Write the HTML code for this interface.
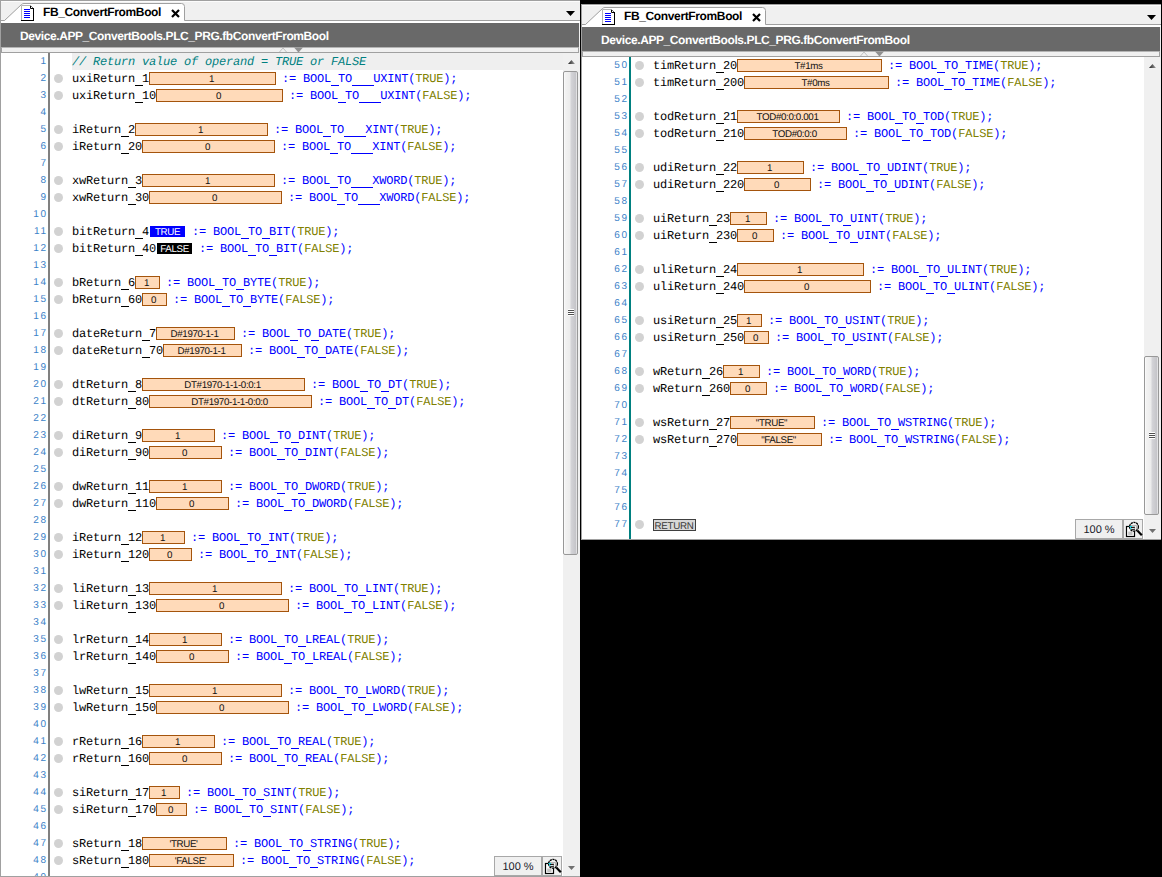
<!DOCTYPE html>
<html>
<head>
<meta charset="utf-8">
<title>FB_ConvertFromBool</title>
<style>
html,body{margin:0;padding:0;}
body{width:1162px;height:877px;background:#000;position:relative;overflow:hidden;font-family:"Liberation Sans",sans-serif;text-rendering:geometricPrecision;}
.panel{position:absolute;width:580px;background:#fff;overflow:hidden;}
.pl{left:0;top:0;height:877px;}
.pr{left:581px;top:4px;height:536px;}
.blk1{position:absolute;left:580px;top:0;width:1px;height:877px;background:#000;}
.panel:before{content:"";position:absolute;left:0;top:0;width:1px;height:100%;background:#a0a0a0;z-index:5;}
.hdrbg{position:absolute;left:0;top:0;width:580px;height:53px;background:#f0f0f0;}
.tabbar{position:absolute;left:0;top:0;width:580px;height:23px;background:#f0f0f0;box-sizing:border-box;border-top:1px solid #a0a0a0;}
.tabbar:before{content:"";position:absolute;left:0;top:0;width:580px;height:1px;background:#fcfcfc;}
.tabbar:after{content:"";position:absolute;left:0;top:19px;width:580px;height:3px;background:#fff;border-top:1px solid #a0a0a0;box-sizing:border-box;}
.tabshape{position:absolute;left:0;top:0;}
.docicon{position:absolute;left:21px;top:5px;}
.tabtxt{position:absolute;left:43px;top:5px;font-size:12px;line-height:15px;font-weight:bold;color:#000;white-space:nowrap;letter-spacing:-0.37px;}
.tabx{position:absolute;left:170.5px;top:8.5px;}
.tabdd{position:absolute;left:566px;top:11px;}
.crumb{position:absolute;left:1px;top:23px;width:578px;height:24px;background:#696969;color:#fff;font-weight:bold;font-size:12px;line-height:24px;white-space:nowrap;letter-spacing:-0.41px;}
.crumb span{position:absolute;left:19px;top:1px;}
.split{position:absolute;left:1px;top:47px;width:578px;height:6px;background:#f0f0f0;box-sizing:border-box;border-top:1px solid #b4b4b4;border-bottom:1px solid #a0a0a0;border-left:1px solid #a0a0a0;border-right:1px solid #a0a0a0;}
.splitmk{position:absolute;left:279px;top:47px;}
.code{position:absolute;left:0;top:0;width:563px;height:100%;}
.gut{position:absolute;left:48px;top:53px;width:2px;bottom:0;background:#808080;}
.pr .gut{background:#008080;}
.ln{position:absolute;left:0;width:47.6px;height:17px;line-height:17px;text-align:right;font-size:10px;letter-spacing:1.64px;color:#3c82c8;}
.dot{position:absolute;left:54px;width:9px;height:9px;border-radius:50%;background:#d2d2d2;}
.hl{position:absolute;left:72px;width:491px;height:17px;background:#efefef;}
.row{position:absolute;left:72px;height:17px;line-height:17px;margin-top:1px;font-family:"Liberation Mono",monospace;font-size:12px;letter-spacing:-0.2px;white-space:pre;color:#000;}
.row u{text-decoration:none;-webkit-text-fill-color:transparent;position:relative;}
.row u:after{content:"";position:absolute;left:-0.5px;top:13px;width:8px;height:1px;background:currentColor;}
.cm{color:#008080;font-style:italic;}
.k{color:#0000ff;}
.o{color:#808000;}
.b{display:inline-block;vertical-align:top;margin-top:1px;margin-right:-1px;height:13px;box-sizing:border-box;padding-right:2px;border:1px solid #a4540c;background:#ffdab9;font-family:"Liberation Sans",sans-serif;font-size:9.75px;line-height:13px;letter-spacing:-0.35px;text-align:center;color:#101010;overflow:hidden;}
.bb{display:inline-block;vertical-align:top;margin-top:2px;margin-left:1px;width:35px;height:11px;font-family:"Liberation Sans",sans-serif;font-size:9.75px;line-height:13px;letter-spacing:-0.35px;text-align:center;color:#fff;overflow:hidden;}
.bt{background:#0000ff;}
.bf{background:#000;}
.ret{position:absolute;left:72px;width:43px;height:12px;box-sizing:border-box;border:1px solid #404040;background:#d8d8d8;font-size:9.75px;line-height:14px;letter-spacing:-0.25px;text-align:center;text-indent:-1px;color:#383838;overflow:hidden;}
.sb{position:absolute;left:563px;top:53px;width:17px;bottom:1px;background:#f0f0f0;}
.sbup{position:absolute;left:5px;top:7px;}
.sbdn{position:absolute;left:5px;bottom:6px;}
.thumb{position:absolute;left:0;width:15px;box-sizing:border-box;border:1px solid #989898;border-radius:2px;background:linear-gradient(to right,#ffffff 0,#f3f3f3 1px,#ececec 6px,#d4d4d8 7px,#c4c4c8 12px,#ffffff 13px);}
.grip{position:absolute;left:4px;top:50%;margin-top:-4px;width:6px;height:7px;background:linear-gradient(to bottom,#fff 0,#fff 1px,#505050 1px,#505050 2px,#fff 2px,#fff 3px,#505050 3px,#505050 4px,#fff 4px,#fff 5px,#505050 5px,#505050 6px,#fff 6px);}
.zoom{position:absolute;left:494px;bottom:1px;width:48px;height:20px;box-sizing:border-box;border:1px solid #a8a8a8;background:#f0f0f0;font-size:11px;line-height:20px;text-align:center;color:#1a1a2a;}
.zoomic{position:absolute;left:542px;bottom:1px;width:20px;height:20px;box-sizing:border-box;border:1px solid #a8a8a8;background:#f0f0f0;}
.zoomic svg{position:absolute;left:1px;top:1px;}
.botline{position:absolute;left:0;bottom:0;width:580px;height:1px;background:#a0a0a0;}

</style>
</head>
<body>
<div class="panel pl">
<div class="hdrbg"></div>
<div class="tabbar"></div>
<svg class="tabshape" width="200" height="24" viewBox="0 0 200 24">
<path d="M1 20.5 L4.5 20.5 L21.5 4.5 Q22.5 3.5 24 3.5 L181.5 3.5 Q184.5 3.5 184.5 6.5 L184.5 23 L1 23 Z" fill="#ffffff" stroke="none"/>
<path d="M1 20.5 L4.5 20.5 L21.5 4.5 Q22.5 3.5 24 3.5 L181.5 3.5 Q184.5 3.5 184.5 6.5 L184.5 20.5" fill="none" stroke="#a0a0a0" stroke-width="1"/>
</svg>
<svg class="docicon" width="14" height="16" viewBox="0 0 14 16">
<path d="M0 0 L9 0 L13 4 L13 16 L0 16 Z" fill="#ffffff" stroke="none"/>
<path d="M0.5 15 L0.5 0.5 L9.5 0.5" fill="none" stroke="#b4b4b4" stroke-width="1"/>
<path d="M9.5 0.5 L12.5 3.5" fill="none" stroke="#707070" stroke-width="1"/>
<path d="M9.5 1 L9.5 3.5 L12.5 3.5" fill="none" stroke="#000" stroke-width="1"/>
<path d="M12.5 3 L12.5 15.5" fill="none" stroke="#000" stroke-width="1"/>
<path d="M0 15.5 L13 15.5" fill="none" stroke="#000" stroke-width="1"/>
<path d="M3 4.5 H9 M3 6.5 H9 M3 8.5 H9 M3 10.5 H9 M3 12.5 H9" stroke="#0000ff" stroke-width="1" fill="none"/>
</svg>
<div class="tabtxt">FB_ConvertFromBool</div>
<svg class="tabx" width="9" height="9" viewBox="0 0 9 9"><path d="M1 1 L8 8 M8 1 L1 8" stroke="#000" stroke-width="2.2" fill="none"/></svg>
<svg class="tabdd" width="9" height="5" viewBox="0 0 9 5"><path d="M0 0 H9 L4.5 5 Z" fill="#000"/></svg>
<div class="crumb"><span>Device.APP_ConvertBools.PLC_PRG.fbConvertFromBool</span></div>
<div class="split"></div>
<svg class="splitmk" width="30" height="6" viewBox="0 0 30 6">
<path d="M0.5 5 L4 1 L7.5 5" fill="none" stroke="#c0c0c0" stroke-width="1"/>
<path d="M15 0.5 H24 L19.5 5.5 Z" fill="#909090"/>
</svg>
<div class="code">
<div class="gut"></div>
<div class="ln" style="top:53px">1</div>
<div class="hl" style="top:53px"></div>
<div class="row cm" style="top:53px">// Return value of operand = TRUE or FALSE</div>
<div class="ln" style="top:70px">2</div>
<div class="dot" style="top:74px"></div>
<div class="row" style="top:70px">uxiReturn<u>_</u>1<span class="b" style="width:127px">1</span><span class="k"> := BOOL<u>_</u>TO<u>_</u><u>_</u><u>_</u>UXINT(</span><span class="o">TRUE</span><span class="k">);</span></div>
<div class="ln" style="top:87px">3</div>
<div class="dot" style="top:91px"></div>
<div class="row" style="top:87px">uxiReturn<u>_</u>10<span class="b" style="width:127px">0</span><span class="k"> := BOOL<u>_</u>TO<u>_</u><u>_</u><u>_</u>UXINT(</span><span class="o">FALSE</span><span class="k">);</span></div>
<div class="ln" style="top:104px">4</div>
<div class="ln" style="top:121px">5</div>
<div class="dot" style="top:125px"></div>
<div class="row" style="top:121px">iReturn<u>_</u>2<span class="b" style="width:133px">1</span><span class="k"> := BOOL<u>_</u>TO<u>_</u><u>_</u><u>_</u>XINT(</span><span class="o">TRUE</span><span class="k">);</span></div>
<div class="ln" style="top:138px">6</div>
<div class="dot" style="top:142px"></div>
<div class="row" style="top:138px">iReturn<u>_</u>20<span class="b" style="width:133px">0</span><span class="k"> := BOOL<u>_</u>TO<u>_</u><u>_</u><u>_</u>XINT(</span><span class="o">FALSE</span><span class="k">);</span></div>
<div class="ln" style="top:155px">7</div>
<div class="ln" style="top:172px">8</div>
<div class="dot" style="top:176px"></div>
<div class="row" style="top:172px">xwReturn<u>_</u>3<span class="b" style="width:133px">1</span><span class="k"> := BOOL<u>_</u>TO<u>_</u><u>_</u><u>_</u>XWORD(</span><span class="o">TRUE</span><span class="k">);</span></div>
<div class="ln" style="top:189px">9</div>
<div class="dot" style="top:193px"></div>
<div class="row" style="top:189px">xwReturn<u>_</u>30<span class="b" style="width:133px">0</span><span class="k"> := BOOL<u>_</u>TO<u>_</u><u>_</u><u>_</u>XWORD(</span><span class="o">FALSE</span><span class="k">);</span></div>
<div class="ln" style="top:206px">10</div>
<div class="ln" style="top:223px">11</div>
<div class="dot" style="top:227px"></div>
<div class="row" style="top:223px">bitReturn<u>_</u>4<span class="bb bt">TRUE</span><span class="k"> := BOOL<u>_</u>TO<u>_</u>BIT(</span><span class="o">TRUE</span><span class="k">);</span></div>
<div class="ln" style="top:240px">12</div>
<div class="dot" style="top:244px"></div>
<div class="row" style="top:240px">bitReturn<u>_</u>40<span class="bb bf">FALSE</span><span class="k"> := BOOL<u>_</u>TO<u>_</u>BIT(</span><span class="o">FALSE</span><span class="k">);</span></div>
<div class="ln" style="top:257px">13</div>
<div class="ln" style="top:274px">14</div>
<div class="dot" style="top:278px"></div>
<div class="row" style="top:274px">bReturn<u>_</u>6<span class="b" style="width:25px">1</span><span class="k"> := BOOL<u>_</u>TO<u>_</u>BYTE(</span><span class="o">TRUE</span><span class="k">);</span></div>
<div class="ln" style="top:291px">15</div>
<div class="dot" style="top:295px"></div>
<div class="row" style="top:291px">bReturn<u>_</u>60<span class="b" style="width:25px">0</span><span class="k"> := BOOL<u>_</u>TO<u>_</u>BYTE(</span><span class="o">FALSE</span><span class="k">);</span></div>
<div class="ln" style="top:308px">16</div>
<div class="ln" style="top:325px">17</div>
<div class="dot" style="top:329px"></div>
<div class="row" style="top:325px">dateReturn<u>_</u>7<span class="b" style="width:79px">D#1970-1-1</span><span class="k"> := BOOL<u>_</u>TO<u>_</u>DATE(</span><span class="o">TRUE</span><span class="k">);</span></div>
<div class="ln" style="top:342px">18</div>
<div class="dot" style="top:346px"></div>
<div class="row" style="top:342px">dateReturn<u>_</u>70<span class="b" style="width:79px">D#1970-1-1</span><span class="k"> := BOOL<u>_</u>TO<u>_</u>DATE(</span><span class="o">FALSE</span><span class="k">);</span></div>
<div class="ln" style="top:359px">19</div>
<div class="ln" style="top:376px">20</div>
<div class="dot" style="top:380px"></div>
<div class="row" style="top:376px">dtReturn<u>_</u>8<span class="b" style="width:163px">DT#1970-1-1-0:0:1</span><span class="k"> := BOOL<u>_</u>TO<u>_</u>DT(</span><span class="o">TRUE</span><span class="k">);</span></div>
<div class="ln" style="top:393px">21</div>
<div class="dot" style="top:397px"></div>
<div class="row" style="top:393px">dtReturn<u>_</u>80<span class="b" style="width:163px">DT#1970-1-1-0:0:0</span><span class="k"> := BOOL<u>_</u>TO<u>_</u>DT(</span><span class="o">FALSE</span><span class="k">);</span></div>
<div class="ln" style="top:410px">22</div>
<div class="ln" style="top:427px">23</div>
<div class="dot" style="top:431px"></div>
<div class="row" style="top:427px">diReturn<u>_</u>9<span class="b" style="width:73px">1</span><span class="k"> := BOOL<u>_</u>TO<u>_</u>DINT(</span><span class="o">TRUE</span><span class="k">);</span></div>
<div class="ln" style="top:444px">24</div>
<div class="dot" style="top:448px"></div>
<div class="row" style="top:444px">diReturn<u>_</u>90<span class="b" style="width:73px">0</span><span class="k"> := BOOL<u>_</u>TO<u>_</u>DINT(</span><span class="o">FALSE</span><span class="k">);</span></div>
<div class="ln" style="top:461px">25</div>
<div class="ln" style="top:478px">26</div>
<div class="dot" style="top:482px"></div>
<div class="row" style="top:478px">dwReturn<u>_</u>11<span class="b" style="width:73px">1</span><span class="k"> := BOOL<u>_</u>TO<u>_</u>DWORD(</span><span class="o">TRUE</span><span class="k">);</span></div>
<div class="ln" style="top:495px">27</div>
<div class="dot" style="top:499px"></div>
<div class="row" style="top:495px">dwReturn<u>_</u>110<span class="b" style="width:73px">0</span><span class="k"> := BOOL<u>_</u>TO<u>_</u>DWORD(</span><span class="o">FALSE</span><span class="k">);</span></div>
<div class="ln" style="top:512px">28</div>
<div class="ln" style="top:529px">29</div>
<div class="dot" style="top:533px"></div>
<div class="row" style="top:529px">iReturn<u>_</u>12<span class="b" style="width:43px">1</span><span class="k"> := BOOL<u>_</u>TO<u>_</u>INT(</span><span class="o">TRUE</span><span class="k">);</span></div>
<div class="ln" style="top:546px">30</div>
<div class="dot" style="top:550px"></div>
<div class="row" style="top:546px">iReturn<u>_</u>120<span class="b" style="width:43px">0</span><span class="k"> := BOOL<u>_</u>TO<u>_</u>INT(</span><span class="o">FALSE</span><span class="k">);</span></div>
<div class="ln" style="top:563px">31</div>
<div class="ln" style="top:580px">32</div>
<div class="dot" style="top:584px"></div>
<div class="row" style="top:580px">liReturn<u>_</u>13<span class="b" style="width:133px">1</span><span class="k"> := BOOL<u>_</u>TO<u>_</u>LINT(</span><span class="o">TRUE</span><span class="k">);</span></div>
<div class="ln" style="top:597px">33</div>
<div class="dot" style="top:601px"></div>
<div class="row" style="top:597px">liReturn<u>_</u>130<span class="b" style="width:133px">0</span><span class="k"> := BOOL<u>_</u>TO<u>_</u>LINT(</span><span class="o">FALSE</span><span class="k">);</span></div>
<div class="ln" style="top:614px">34</div>
<div class="ln" style="top:631px">35</div>
<div class="dot" style="top:635px"></div>
<div class="row" style="top:631px">lrReturn<u>_</u>14<span class="b" style="width:73px">1</span><span class="k"> := BOOL<u>_</u>TO<u>_</u>LREAL(</span><span class="o">TRUE</span><span class="k">);</span></div>
<div class="ln" style="top:648px">36</div>
<div class="dot" style="top:652px"></div>
<div class="row" style="top:648px">lrReturn<u>_</u>140<span class="b" style="width:73px">0</span><span class="k"> := BOOL<u>_</u>TO<u>_</u>LREAL(</span><span class="o">FALSE</span><span class="k">);</span></div>
<div class="ln" style="top:665px">37</div>
<div class="ln" style="top:682px">38</div>
<div class="dot" style="top:686px"></div>
<div class="row" style="top:682px">lwReturn<u>_</u>15<span class="b" style="width:133px">1</span><span class="k"> := BOOL<u>_</u>TO<u>_</u>LWORD(</span><span class="o">TRUE</span><span class="k">);</span></div>
<div class="ln" style="top:699px">39</div>
<div class="dot" style="top:703px"></div>
<div class="row" style="top:699px">lwReturn<u>_</u>150<span class="b" style="width:133px">0</span><span class="k"> := BOOL<u>_</u>TO<u>_</u>LWORD(</span><span class="o">FALSE</span><span class="k">);</span></div>
<div class="ln" style="top:716px">40</div>
<div class="ln" style="top:733px">41</div>
<div class="dot" style="top:737px"></div>
<div class="row" style="top:733px">rReturn<u>_</u>16<span class="b" style="width:73px">1</span><span class="k"> := BOOL<u>_</u>TO<u>_</u>REAL(</span><span class="o">TRUE</span><span class="k">);</span></div>
<div class="ln" style="top:750px">42</div>
<div class="dot" style="top:754px"></div>
<div class="row" style="top:750px">rReturn<u>_</u>160<span class="b" style="width:73px">0</span><span class="k"> := BOOL<u>_</u>TO<u>_</u>REAL(</span><span class="o">FALSE</span><span class="k">);</span></div>
<div class="ln" style="top:767px">43</div>
<div class="ln" style="top:784px">44</div>
<div class="dot" style="top:788px"></div>
<div class="row" style="top:784px">siReturn<u>_</u>17<span class="b" style="width:31px">1</span><span class="k"> := BOOL<u>_</u>TO<u>_</u>SINT(</span><span class="o">TRUE</span><span class="k">);</span></div>
<div class="ln" style="top:801px">45</div>
<div class="dot" style="top:805px"></div>
<div class="row" style="top:801px">siReturn<u>_</u>170<span class="b" style="width:31px">0</span><span class="k"> := BOOL<u>_</u>TO<u>_</u>SINT(</span><span class="o">FALSE</span><span class="k">);</span></div>
<div class="ln" style="top:818px">46</div>
<div class="ln" style="top:835px">47</div>
<div class="dot" style="top:839px"></div>
<div class="row" style="top:835px">sReturn<u>_</u>18<span class="b" style="width:85px">'TRUE'</span><span class="k"> := BOOL<u>_</u>TO<u>_</u>STRING(</span><span class="o">TRUE</span><span class="k">);</span></div>
<div class="ln" style="top:852px">48</div>
<div class="dot" style="top:856px"></div>
<div class="row" style="top:852px">sReturn<u>_</u>180<span class="b" style="width:85px">'FALSE'</span><span class="k"> := BOOL<u>_</u>TO<u>_</u>STRING(</span><span class="o">FALSE</span><span class="k">);</span></div>
<div class="ln" style="top:869px">49</div>
</div>
<div class="sb">
<svg class="sbup" width="7" height="4" viewBox="0 0 7 4"><defs><linearGradient id="ug" x1="0" x2="1" y1="0" y2="0"><stop offset="0" stop-color="#202020"/><stop offset="1" stop-color="#a0a0a0"/></linearGradient></defs><path d="M0 4 L3.5 0 L7 4 Z" fill="url(#ug)"/></svg>
<div class="thumb" style="top:18px;height:484px"><div class="grip"></div></div>
<svg class="sbdn" width="7" height="4" viewBox="0 0 7 4"><path d="M0 0 H7 L3.5 4 Z" fill="#707070"/></svg>
</div>
<div class="zoom">100 %</div>
<div class="zoomic">
<svg width="18" height="18" viewBox="0 0 18 18">
<path d="M4.5 9 V4.5 H11.5 V10" fill="#fff" stroke="#000" stroke-width="1"/>
<rect x="1.5" y="5.5" width="8" height="10" fill="#fff" stroke="#000" stroke-width="1.2"/>
<rect x="3.2" y="10.5" width="4.3" height="3.6" fill="#c4c4c4"/>
<circle cx="9" cy="5.8" r="4.4" fill="#f2f2f2" fill-opacity="0.75" stroke="#000" stroke-width="1.3" stroke-dasharray="2.2 0.6"/>
<path d="M4.5 5.5 H7 M5 7.5 H6.5" stroke="#00e0f0" stroke-width="1"/>
<path d="M6 6.5 H9.8 M6.5 8.4 H9.8" stroke="#000" stroke-width="0.9"/>
<path d="M12.3 9.6 L16.8 14.2" stroke="#000" stroke-width="2.2"/>
</svg>
</div>
<div class="botline"></div>
</div>
<div class="panel pr">
<div class="hdrbg"></div>
<div class="tabbar"></div>
<svg class="tabshape" width="200" height="24" viewBox="0 0 200 24">
<path d="M1 20.5 L4.5 20.5 L21.5 4.5 Q22.5 3.5 24 3.5 L181.5 3.5 Q184.5 3.5 184.5 6.5 L184.5 23 L1 23 Z" fill="#ffffff" stroke="none"/>
<path d="M1 20.5 L4.5 20.5 L21.5 4.5 Q22.5 3.5 24 3.5 L181.5 3.5 Q184.5 3.5 184.5 6.5 L184.5 20.5" fill="none" stroke="#a0a0a0" stroke-width="1"/>
</svg>
<svg class="docicon" width="14" height="16" viewBox="0 0 14 16">
<path d="M0 0 L9 0 L13 4 L13 16 L0 16 Z" fill="#ffffff" stroke="none"/>
<path d="M0.5 15 L0.5 0.5 L9.5 0.5" fill="none" stroke="#b4b4b4" stroke-width="1"/>
<path d="M9.5 0.5 L12.5 3.5" fill="none" stroke="#707070" stroke-width="1"/>
<path d="M9.5 1 L9.5 3.5 L12.5 3.5" fill="none" stroke="#000" stroke-width="1"/>
<path d="M12.5 3 L12.5 15.5" fill="none" stroke="#000" stroke-width="1"/>
<path d="M0 15.5 L13 15.5" fill="none" stroke="#000" stroke-width="1"/>
<path d="M3 4.5 H9 M3 6.5 H9 M3 8.5 H9 M3 10.5 H9 M3 12.5 H9" stroke="#0000ff" stroke-width="1" fill="none"/>
</svg>
<div class="tabtxt">FB_ConvertFromBool</div>
<svg class="tabx" width="9" height="9" viewBox="0 0 9 9"><path d="M1 1 L8 8 M8 1 L1 8" stroke="#000" stroke-width="2.2" fill="none"/></svg>
<svg class="tabdd" width="9" height="5" viewBox="0 0 9 5"><path d="M0 0 H9 L4.5 5 Z" fill="#000"/></svg>
<div class="crumb"><span>Device.APP_ConvertBools.PLC_PRG.fbConvertFromBool</span></div>
<div class="split"></div>
<svg class="splitmk" width="30" height="6" viewBox="0 0 30 6">
<path d="M0.5 5 L4 1 L7.5 5" fill="none" stroke="#c0c0c0" stroke-width="1"/>
<path d="M15 0.5 H24 L19.5 5.5 Z" fill="#909090"/>
</svg>
<div class="code">
<div class="gut"></div>
<div class="ln" style="top:53px">50</div>
<div class="dot" style="top:57px"></div>
<div class="row" style="top:53px">timReturn<u>_</u>20<span class="b" style="width:145px">T#1ms</span><span class="k"> := BOOL<u>_</u>TO<u>_</u>TIME(</span><span class="o">TRUE</span><span class="k">);</span></div>
<div class="ln" style="top:70px">51</div>
<div class="dot" style="top:74px"></div>
<div class="row" style="top:70px">timReturn<u>_</u>200<span class="b" style="width:145px">T#0ms</span><span class="k"> := BOOL<u>_</u>TO<u>_</u>TIME(</span><span class="o">FALSE</span><span class="k">);</span></div>
<div class="ln" style="top:87px">52</div>
<div class="ln" style="top:104px">53</div>
<div class="dot" style="top:108px"></div>
<div class="row" style="top:104px">todReturn<u>_</u>21<span class="b" style="width:103px">TOD#0:0:0.001</span><span class="k"> := BOOL<u>_</u>TO<u>_</u>TOD(</span><span class="o">TRUE</span><span class="k">);</span></div>
<div class="ln" style="top:121px">54</div>
<div class="dot" style="top:125px"></div>
<div class="row" style="top:121px">todReturn<u>_</u>210<span class="b" style="width:103px">TOD#0:0:0</span><span class="k"> := BOOL<u>_</u>TO<u>_</u>TOD(</span><span class="o">FALSE</span><span class="k">);</span></div>
<div class="ln" style="top:138px">55</div>
<div class="ln" style="top:155px">56</div>
<div class="dot" style="top:159px"></div>
<div class="row" style="top:155px">udiReturn<u>_</u>22<span class="b" style="width:67px">1</span><span class="k"> := BOOL<u>_</u>TO<u>_</u>UDINT(</span><span class="o">TRUE</span><span class="k">);</span></div>
<div class="ln" style="top:172px">57</div>
<div class="dot" style="top:176px"></div>
<div class="row" style="top:172px">udiReturn<u>_</u>220<span class="b" style="width:67px">0</span><span class="k"> := BOOL<u>_</u>TO<u>_</u>UDINT(</span><span class="o">FALSE</span><span class="k">);</span></div>
<div class="ln" style="top:189px">58</div>
<div class="ln" style="top:206px">59</div>
<div class="dot" style="top:210px"></div>
<div class="row" style="top:206px">uiReturn<u>_</u>23<span class="b" style="width:37px">1</span><span class="k"> := BOOL<u>_</u>TO<u>_</u>UINT(</span><span class="o">TRUE</span><span class="k">);</span></div>
<div class="ln" style="top:223px">60</div>
<div class="dot" style="top:227px"></div>
<div class="row" style="top:223px">uiReturn<u>_</u>230<span class="b" style="width:37px">0</span><span class="k"> := BOOL<u>_</u>TO<u>_</u>UINT(</span><span class="o">FALSE</span><span class="k">);</span></div>
<div class="ln" style="top:240px">61</div>
<div class="ln" style="top:257px">62</div>
<div class="dot" style="top:261px"></div>
<div class="row" style="top:257px">uliReturn<u>_</u>24<span class="b" style="width:127px">1</span><span class="k"> := BOOL<u>_</u>TO<u>_</u>ULINT(</span><span class="o">TRUE</span><span class="k">);</span></div>
<div class="ln" style="top:274px">63</div>
<div class="dot" style="top:278px"></div>
<div class="row" style="top:274px">uliReturn<u>_</u>240<span class="b" style="width:127px">0</span><span class="k"> := BOOL<u>_</u>TO<u>_</u>ULINT(</span><span class="o">FALSE</span><span class="k">);</span></div>
<div class="ln" style="top:291px">64</div>
<div class="ln" style="top:308px">65</div>
<div class="dot" style="top:312px"></div>
<div class="row" style="top:308px">usiReturn<u>_</u>25<span class="b" style="width:25px">1</span><span class="k"> := BOOL<u>_</u>TO<u>_</u>USINT(</span><span class="o">TRUE</span><span class="k">);</span></div>
<div class="ln" style="top:325px">66</div>
<div class="dot" style="top:329px"></div>
<div class="row" style="top:325px">usiReturn<u>_</u>250<span class="b" style="width:25px">0</span><span class="k"> := BOOL<u>_</u>TO<u>_</u>USINT(</span><span class="o">FALSE</span><span class="k">);</span></div>
<div class="ln" style="top:342px">67</div>
<div class="ln" style="top:359px">68</div>
<div class="dot" style="top:363px"></div>
<div class="row" style="top:359px">wReturn<u>_</u>26<span class="b" style="width:37px">1</span><span class="k"> := BOOL<u>_</u>TO<u>_</u>WORD(</span><span class="o">TRUE</span><span class="k">);</span></div>
<div class="ln" style="top:376px">69</div>
<div class="dot" style="top:380px"></div>
<div class="row" style="top:376px">wReturn<u>_</u>260<span class="b" style="width:37px">0</span><span class="k"> := BOOL<u>_</u>TO<u>_</u>WORD(</span><span class="o">FALSE</span><span class="k">);</span></div>
<div class="ln" style="top:393px">70</div>
<div class="ln" style="top:410px">71</div>
<div class="dot" style="top:414px"></div>
<div class="row" style="top:410px">wsReturn<u>_</u>27<span class="b" style="width:85px">"TRUE"</span><span class="k"> := BOOL<u>_</u>TO<u>_</u>WSTRING(</span><span class="o">TRUE</span><span class="k">);</span></div>
<div class="ln" style="top:427px">72</div>
<div class="dot" style="top:431px"></div>
<div class="row" style="top:427px">wsReturn<u>_</u>270<span class="b" style="width:85px">"FALSE"</span><span class="k"> := BOOL<u>_</u>TO<u>_</u>WSTRING(</span><span class="o">FALSE</span><span class="k">);</span></div>
<div class="ln" style="top:444px">73</div>
<div class="ln" style="top:461px">74</div>
<div class="ln" style="top:478px">75</div>
<div class="ln" style="top:495px">76</div>
<div class="ln" style="top:512px">77</div>
<div class="dot" style="top:516px"></div>
<div class="ret" style="top:515px">RETURN</div>
</div>
<div class="sb">
<svg class="sbup" width="7" height="4" viewBox="0 0 7 4"><defs><linearGradient id="ug" x1="0" x2="1" y1="0" y2="0"><stop offset="0" stop-color="#202020"/><stop offset="1" stop-color="#a0a0a0"/></linearGradient></defs><path d="M0 4 L3.5 0 L7 4 Z" fill="url(#ug)"/></svg>
<div class="thumb" style="top:299px;height:159px"><div class="grip"></div></div>
<svg class="sbdn" width="7" height="4" viewBox="0 0 7 4"><path d="M0 0 H7 L3.5 4 Z" fill="#707070"/></svg>
</div>
<div class="zoom">100 %</div>
<div class="zoomic">
<svg width="18" height="18" viewBox="0 0 18 18">
<path d="M4.5 9 V4.5 H11.5 V10" fill="#fff" stroke="#000" stroke-width="1"/>
<rect x="1.5" y="5.5" width="8" height="10" fill="#fff" stroke="#000" stroke-width="1.2"/>
<rect x="3.2" y="10.5" width="4.3" height="3.6" fill="#c4c4c4"/>
<circle cx="9" cy="5.8" r="4.4" fill="#f2f2f2" fill-opacity="0.75" stroke="#000" stroke-width="1.3" stroke-dasharray="2.2 0.6"/>
<path d="M4.5 5.5 H7 M5 7.5 H6.5" stroke="#00e0f0" stroke-width="1"/>
<path d="M6 6.5 H9.8 M6.5 8.4 H9.8" stroke="#000" stroke-width="0.9"/>
<path d="M12.3 9.6 L16.8 14.2" stroke="#000" stroke-width="2.2"/>
</svg>
</div>
<div class="botline"></div>
</div>
<div class="blk1"></div>
</body>
</html>
